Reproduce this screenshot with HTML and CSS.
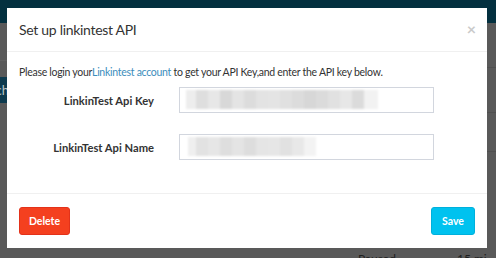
FILE: index.html
```html
<!DOCTYPE html>
<html>
<head>
<meta charset="utf-8">
<link rel="stylesheet" href="styles.css">
</head>
<body>
<div class="page">
  <div class="topbar"></div>
  <div class="content">
    <div class="side-left">
      <div class="rule-left"></div>
      <div class="search-btn">Search</div>
    </div>
    <div class="middle">
      <div class="bottom-row"><span class="status">Paused</span><span class="interval">15 min</span></div>
    </div>
    <div class="side-right">
      <div class="row r1"></div>
      <div class="row r2"><span class="cell">Len</span></div>
    </div>
  </div>
</div>

<div class="modal">
  <div class="modal-header">
    <h4 class="modal-title">Set up linkintest API</h4>
    <span class="close">&times;</span>
  </div>
  <div class="modal-body">
    <p class="intro">Please login your<a href="#" class="link">Linkintest account</a> to get your API Key,and enter the API key below.</p>
    <div class="form">
      <label class="label">LinkinTest Api Key</label>
      <div class="input"><div class="blur blur-key"></div></div>
      <label class="label">LinkinTest Api Name</label>
      <div class="input"><div class="blur blur-name"></div></div>
    </div>
  </div>
  <div class="modal-footer">
    <button class="btn btn-delete">Delete</button>
    <button class="btn btn-save">Save</button>
  </div>
</div>
</body>
</html>
```

FILE: styles.css
```css
* { box-sizing: border-box; }
html, body { margin: 0; padding: 0; }
body {
  width: 496px;
  height: 258px;
  overflow: hidden;
  background: #595959;
  font-family: "Lato", "Open Sans", sans-serif;
  position: relative;
}
.page { display: flex; flex-direction: column; height: 258px; }
.topbar { height: 23px; background: #03303f; flex: none; }
.content {
  flex: 1;
  display: grid;
  grid-template-columns: 7px 480px 9px;
  overflow: hidden;
}
.side-left { overflow: hidden; }
.rule-left { margin-top: 37px; height: 1px; background: #616161; }
.search-btn {
  margin-top: 16px;
  height: 26px;
  width: 40px;
  margin-left: -31px;
  background: #0d3a4e;
  color: #bfc6c9;
  font-size: 13px;
  line-height: 26px;
  text-align: right;
  white-space: nowrap;
  overflow: hidden;
}
.middle { display: flex; flex-direction: column; justify-content: flex-end; }
.bottom-row {
  height: 9px;
  overflow: hidden;
  font-size: 12px;
  color: #1e1e1e;
  white-space: nowrap;
}
.status { margin-left: 351px; line-height: 20px; }
.interval { margin-left: 61px; line-height: 20px; }
.side-right { overflow: hidden; }
.row { border-bottom: 1px solid #4f4f4f; }
.r1 { margin-top: 44px; height: 46px; border-top: 1px solid #4f4f4f; }
.r2 { height: 39px; padding-top: 17px; }
.cell { display: block; margin-left: -19px; font-size: 12px; color: #1b1b1b; line-height: 14px; white-space: nowrap; }

.modal {
  position: absolute;
  left: 7px;
  top: 8px;
  width: 480px;
  height: 240px;
  background: #fff;
  display: flex;
  flex-direction: column;
  color: #333;
}
.modal-header {
  height: 44px;
  border-bottom: 1px solid #f0f0f0;
  display: flex;
  align-items: center;
  justify-content: space-between;
  padding: 0 11px 0 12px;
}
.modal-title {
  margin: 0;
  font-size: 14px;
  letter-spacing: -0.3px;
  font-weight: 400;
  color: #333;
}
.close {
  font-size: 16px;
  font-weight: 700;
  color: #cacaca;
  line-height: 1;
  margin-bottom: 2px;
}
.modal-body {
  height: 142px;
  border-bottom: 1px solid #f0f0f0;
  padding: 12px 12px 0 12px;
}
.intro {
  margin: 0 0 6px 0;
  font-size: 10.5px;
  letter-spacing: -0.28px;
  line-height: 17px;
  color: #333;
}
.link { color: #3c8dbc; text-decoration: none; }
.form {
  display: grid;
  grid-template-columns: 135px 255px;
  column-gap: 25px;
  row-gap: 21px;
  align-items: center;
}
.label {
  text-align: right;
  font-weight: 700;
  font-size: 11.2px;
  color: #333;
}
.input {
  height: 26px;
  border: 1px solid #d2d6de;
  background: #fff;
}
.blur {
  height: 19px;
  margin-top: 2px;
  filter: blur(1.2px);
}
.blur-key {
  margin-left: 6px;
  width: 192px;
  background: linear-gradient(to right,
    #ededed 0 10px, #dedede 10px 22px, #e7e7e7 22px 34px, #d8d8d8 34px 46px,
    #e4e4e4 46px 58px, #dcdcdc 58px 70px, #e3e3e3 70px 82px, #e4e4e4 82px 94px,
    #e0e0e0 94px 106px, #dcdcdc 106px 118px, #d7d7d7 118px 130px, #dbdbdb 130px 142px,
    #e1e1e1 142px 154px, #e7e7e7 154px 166px, #dbdbdb 166px 178px, #f2f2f2 178px 192px);
}
.blur-name {
  margin-left: 8px;
  width: 128px;
  background: linear-gradient(to right,
    #efefef 0 8px, #e2e2e2 8px 20px, #e6e6e6 20px 32px, #dedede 32px 44px,
    #e4e4e4 44px 56px, #dddddd 56px 68px, #e5e5e5 68px 80px, #e6e6e6 80px 92px,
    #e1e1e1 92px 104px, #e8e8e8 104px 116px, #f3f3f3 116px 128px);
}
.modal-footer {
  flex: 1;
  display: flex;
  justify-content: space-between;
  align-items: flex-start;
  padding: 13px 12px 0 12px;
}
.btn {
  height: 28px;
  border-radius: 3px;
  font-family: "Lato", "Open Sans", sans-serif;
  font-size: 10.5px;
  font-weight: 700;
  color: #fff;
  padding: 0;
  cursor: pointer;
}
.btn-delete { width: 51px; background: #f4401f; border: 1px solid #e3321a; }
.btn-save { width: 44px; background: #00c2ef; border: 1px solid #00b0dc; }
```
